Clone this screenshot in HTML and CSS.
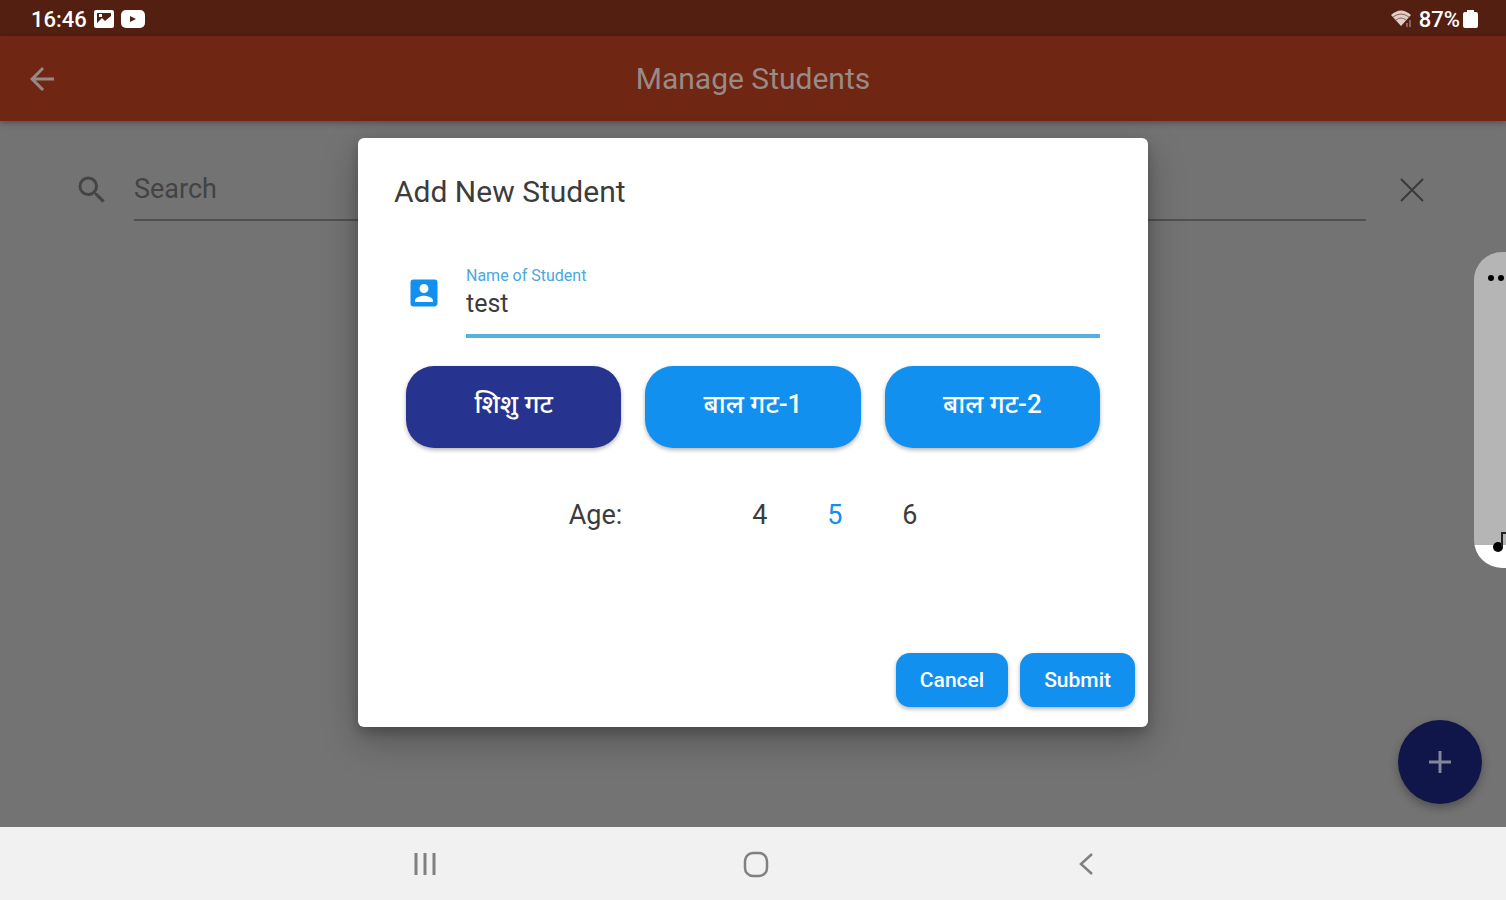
FILE: index.html
```
<!doctype html>
<html lang="en">
  <head>
    <meta charset="utf-8">
    <meta name="viewport" content="width=device-width, initial-scale=1">
    <title>Manage Students</title>
    <link rel="stylesheet" href="styles.css">
  </head>
  <body>
    <div class="status-bar">
      <div class="status-group">
        <span>16:46</span>
        <svg width="20" height="18" viewBox="0 0 20 18">
          <path fill="#fff" fill-rule="evenodd" d="M2 0h16a2 2 0 0 1 2 2v14a2 2 0 0 1-2 2H2a2 2 0 0 1-2-2V2a2 2 0 0 1 2-2zM3 3v10l5-5 3 3 6-5V3zM5 4h3v3H5z"></path>
        </svg>
        <svg width="24" height="18" viewBox="0 0 24 18">
          <rect width="24" height="18" rx="5" fill="#fff"></rect>
          <path d="M9 6l6 3-6 3z" fill="#521f11"></path>
        </svg>
      </div>
      <div class="status-group status-right">
        <svg width="26" height="20" viewBox="0 0 26 20">
          <path d="M1 6Q11-3 21 6L11 17z" fill="#e0cfc9"></path>
          <path d="M3 8q8-6 16 0M6 11q5-4 10 0" fill="none" stroke="#8b6257" stroke-width="1"></path>
          <path d="M17 18v-4M20 18v-7" fill="none" stroke="#8b6257" stroke-width="2"></path>
        </svg>
        <span>87%</span>
        <svg width="15" height="20" viewBox="0 0 15 20">
          <path fill="#fff" d="M4 1h7v2h2q2 0 2 2v12q0 2-2 2H2q-2 0-2-2V5q0-2 2-2h2z"></path>
        </svg>
      </div>
    </div>

    <header class="app-bar">
      <button type="button" class="icon-button" aria-label="Back">
        <svg width="36" height="36" viewBox="0 0 24 24">
          <path fill="#958a86" d="M20 11H7.83l5.59-5.59L12 4l-8 8 8 8 1.41-1.41L7.83 13H20v-2z"></path>
        </svg>
      </button>
      <h1>Manage Students</h1>
    </header>

    <main class="content">
      <div class="search-row">
        <svg width="36" height="36" viewBox="0 0 24 24">
          <path fill="#454545" d="M15.5 14h-.79l-.28-.27A6.47 6.47 0 0 0 16 9.5 6.5 6.5 0 1 0 9.5 16c1.61 0 3.09-.59 4.23-1.57l.27.28v.79l5 4.99L20.49 19l-4.99-5zm-6 0C7.01 14 5 11.99 5 9.5S7.01 5 9.5 5 14 7.01 14 9.5 11.99 14 9.5 14z"></path>
        </svg>
        <input type="text" class="search-input" placeholder="Search" aria-label="Search">
        <button type="button" class="icon-button" aria-label="Clear search">
          <svg width="28" height="28" viewBox="0 0 28 28">
            <path d="M3 3l22 22M25 3L3 25" fill="none" stroke="#3a3a3a" stroke-width="2"></path>
          </svg>
        </button>
      </div>

      <button type="button" class="fab" aria-label="Add student">
        <svg width="24" height="24" viewBox="0 0 24 24">
          <path d="M12 1v22M1 12h22" fill="none" stroke="#84869a" stroke-width="3"></path>
        </svg>
      </button>

      <div class="volume">
        <svg width="32" height="316" viewBox="0 0 32 316">
          <circle cx="17" cy="26" r="3"></circle>
          <circle cx="27" cy="26" r="3"></circle>
          <circle cx="24" cy="295" r="5"></circle>
          <path d="M28 295v-14h6" fill="none" stroke="#222" stroke-width="2"></path>
        </svg>
      </div>
    </main>

    <nav class="nav-bar">
      <button type="button" class="icon-button" aria-label="Recent apps">
        <svg width="28" height="28" viewBox="0 0 28 28">
          <path d="M5 3v22M14 3v22M23 3v22" fill="none" stroke="#808080" stroke-width="3"></path>
        </svg>
      </button>
      <button type="button" class="icon-button" aria-label="Home">
        <svg width="28" height="28" viewBox="0 0 28 28">
          <rect x="3" y="3" width="22" height="23" rx="8" fill="none" stroke="#808080" stroke-width="2.5"></rect>
        </svg>
      </button>
      <button type="button" class="icon-button" aria-label="Back">
        <svg width="28" height="28" viewBox="0 0 28 28">
          <path d="M19 4L8 14l11 10" fill="none" stroke="#808080" stroke-width="2.5"></path>
        </svg>
      </button>
    </nav>

    <div class="overlay">
      <form class="dialog" role="dialog" aria-labelledby="dialog-title">
        <h2 id="dialog-title">Add New Student</h2>

        <div class="field">
          <svg class="field-icon" width="36" height="36" viewBox="0 0 24 24">
            <path fill="#1290f0" d="M3 5v14a2 2 0 0 0 2 2h14c1.1 0 2-.9 2-2V5a2 2 0 0 0-2-2H5a2 2 0 0 0-2 2zm12 4c0 1.66-1.34 3-3 3s-3-1.34-3-3 1.34-3 3-3 3 1.34 3 3zm-9 8c0-2 4-3.1 6-3.1s6 1.1 6 3.1v1H6v-1z"></path>
          </svg>
          <div class="field-body">
            <label for="name">Name of Student</label>
            <input type="text" id="name" value="test">
          </div>
        </div>

        <div class="groups">
          <button type="button" class="group selected" aria-pressed="true">शिशु गट</button>
          <button type="button" class="group" aria-pressed="false">बाल गट-1</button>
          <button type="button" class="group" aria-pressed="false">बाल गट-2</button>
        </div>

        <div class="ages" role="group" aria-labelledby="age-label">
          <span id="age-label" class="age-label">Age:</span>
          <button type="button" class="age" aria-pressed="false">4</button>
          <button type="button" class="age selected" aria-pressed="true">5</button>
          <button type="button" class="age" aria-pressed="false">6</button>
        </div>

        <div class="actions">
          <button type="button" class="action">Cancel</button>
          <button type="submit" class="action">Submit</button>
        </div>
      </form>
    </div>
  </body>
</html>
```
FILE: styles.css
```
*, *:before, *:after {
  box-sizing: border-box;
}

body {
  background: #737373;
  color: #3c3c3c;
  display: flex;
  flex-direction: column;
  font-family: Roboto, "Noto Sans", sans-serif;
  margin: 0;
  min-height: 100vh;
  overflow-x: hidden;
  position: relative;
}

button,
input {
  font-family: inherit;
}

button {
  border: none;
  cursor: pointer;
  padding: 0;
}

svg {
  display: block;
  flex: none;
}

h1,
h2 {
  font-weight: 400;
  margin: 0;
}

.icon-button {
  background: none;
}

.status-bar {
  align-items: center;
  background: #521f11;
  color: #fff;
  display: flex;
  font-size: 22px;
  font-weight: 500;
  height: 36px;
  justify-content: space-between;
  padding: 2px 28px 0 31px;
}

.status-group {
  align-items: center;
  display: flex;
  gap: 7px;
}

.status-right {
  gap: 3px;
}

.app-bar {
  align-items: center;
  background: #6f2613;
  box-shadow: 0 2px 6px rgba(0, 0, 0, 0.3);
  color: #9a8a85;
  display: grid;
  grid-template-columns: 36px 1fr 36px;
  height: 85px;
  padding: 0 24px;
}

.app-bar h1 {
  font-size: 30px;
  text-align: center;
}

.content {
  flex: 1;
  padding: 38px 80px 0 74px;
  position: relative;
}

.search-row {
  align-items: center;
  display: flex;
}

.search-input {
  background: none;
  border: none;
  border-bottom: 2px solid #505050;
  color: #3d3d3d;
  flex: 1;
  font-size: 27px;
  height: 62px;
  margin: 0 32px 0 24px;
  min-width: 0;
  outline: none;
  padding: 0;
}

.search-input::placeholder {
  color: #434343;
  opacity: 1;
}

.fab {
  align-items: center;
  background: #10154a;
  border-radius: 50%;
  bottom: 23px;
  box-shadow: 0 4px 10px rgba(0, 0, 0, 0.3);
  display: flex;
  height: 84px;
  justify-content: center;
  position: absolute;
  right: 24px;
  width: 84px;
}

.volume {
  background: linear-gradient(#b5b5b5 293px, #fff 293px);
  border-radius: 28px 0 0 28px;
  overflow: hidden;
  position: absolute;
  right: 0;
  top: 131px;
}

.nav-bar {
  align-items: center;
  background: #f1f1f1;
  display: flex;
  height: 73px;
  justify-content: space-between;
  padding: 0 26.9% 0 27.3%;
}

.overlay {
  align-items: center;
  bottom: 72px;
  display: flex;
  justify-content: center;
  left: 0;
  padding: 0 16px;
  position: absolute;
  right: 0;
  top: 36px;
}

.dialog {
  background: #fff;
  border-radius: 6px;
  box-shadow: 0 14px 36px rgba(0, 0, 0, 0.25), 0 6px 12px rgba(0, 0, 0, 0.2);
  max-width: 790px;
  width: 100%;
}

.dialog h2 {
  font-size: 30px;
  line-height: 36px;
  padding: 36px 36px 0;
}

.field {
  align-items: flex-start;
  display: flex;
  gap: 24px;
  padding: 56px 48px 0;
}

.field-icon {
  margin-top: 9px;
}

.field-body {
  flex: 1;
}

.field-body label {
  color: #48a9dc;
  display: block;
  font-size: 16px;
  line-height: 20px;
}

.field-body input {
  background: none;
  border: none;
  border-bottom: 4px solid #55b0dc;
  color: #3c3c3c;
  display: block;
  font-size: 25px;
  height: 52px;
  outline: none;
  padding: 0 0 12px;
  width: 100%;
}

.groups {
  display: grid;
  gap: 24px;
  grid-template-columns: repeat(3, 1fr);
  padding: 28px 48px 0;
}

.group {
  background: #1290f0;
  border-radius: 28px;
  box-shadow: 0 2px 4px rgba(0, 0, 0, 0.3);
  color: #fff;
  font-size: 26px;
  font-weight: 500;
  height: 82px;
  padding-bottom: 8px;
}

.group.selected {
  background: #27348f;
}

.ages {
  align-items: center;
  display: flex;
  font-size: 27px;
  justify-content: center;
  padding: 51px 0 0 10px;
}

.age-label {
  margin-right: 100px;
}

.age {
  background: none;
  color: inherit;
  font-size: 27px;
  line-height: 32px;
  width: 75px;
}

.age.selected {
  color: #1290f0;
}

.actions {
  display: flex;
  gap: 12px;
  justify-content: flex-end;
  padding: 122px 13px 20px;
}

.action {
  background: #1290f0;
  border-radius: 14px;
  box-shadow: 0 2px 4px rgba(0, 0, 0, 0.3);
  color: #fff;
  font-size: 21px;
  font-weight: 500;
  height: 54px;
  padding: 0 24px;
}
```
